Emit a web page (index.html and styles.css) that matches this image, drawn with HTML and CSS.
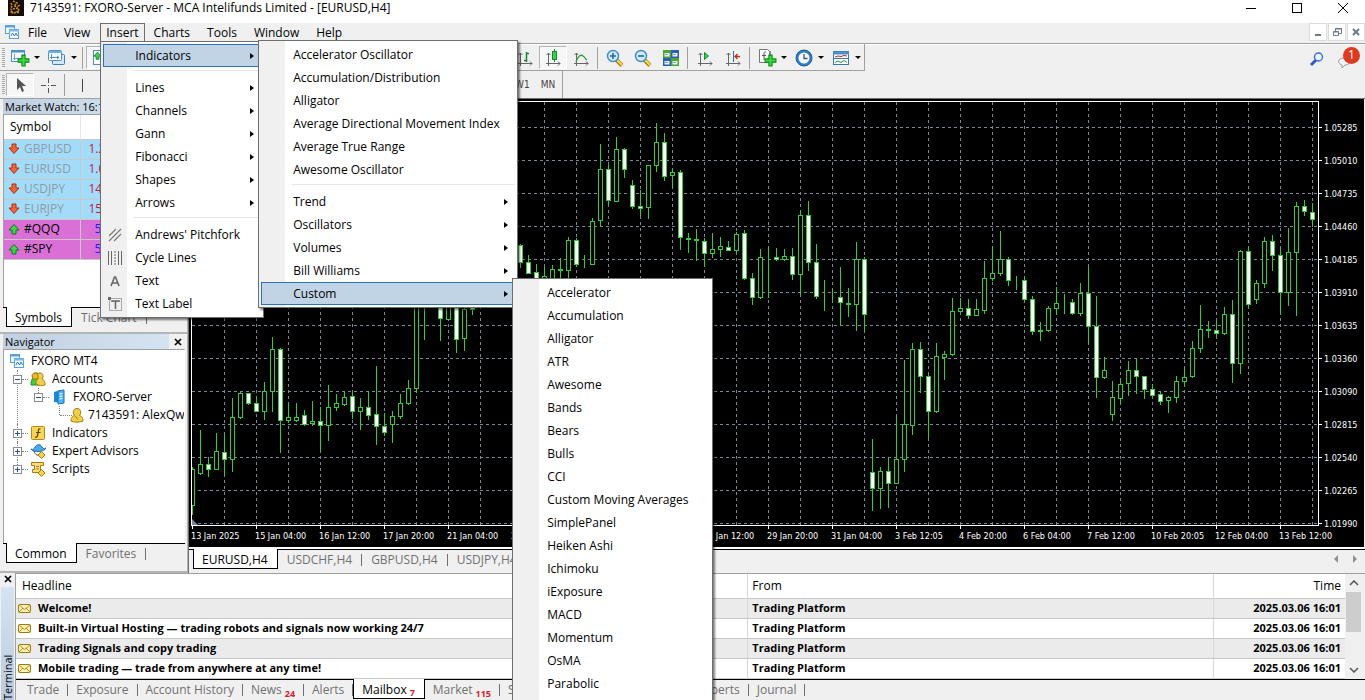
FILE: index.html
```html
<!DOCTYPE html>
<html lang="en">
<head>
    <meta charset="UTF-8">
    <meta name="viewport" content="width=device-width, initial-scale=1.0">
    <title>7143591: FXORO-Server - MCA Intelifunds Limited - [EURUSD,H4]</title>
    <link rel="stylesheet" href="styles.css">
</head>
<body>
    <svg class="defs" aria-hidden="true">
        <symbol id="i-mt" viewBox="0 0 16 16">
            <rect x="1.500" y="1.500" width="9" height="8" fill="#eaf5fd" stroke="#5aa2d8"/>
            <path d="M1 2.500h10" stroke="#5aa2d8" stroke-width="2"/>
            <rect x="5.500" y="5.500" width="9" height="9" fill="#f4faff" stroke="#5aa2d8"/>
            <path d="M5 6.500h10" stroke="#7db9e3" stroke-width="2"/>
            <path d="M7 12l1.500-3 2 3 1.500-3 1.500 3" fill="none" stroke="#2f7fc1"/>
        </symbol>
        <symbol id="i-plus" viewBox="0 0 12 12">
            <path d="M4.500 1h3v3.500H11v3H7.500V11h-3V7.500H1v-3h3.500z" fill="#3ddb3d" stroke="#0c8a1c"/>
        </symbol>
        <symbol id="i-axes" viewBox="0 0 16 16">
            <path d="M3.500 2v13M1 12.500h14M1.500 4l2-2 2 2M13 10.500l2 2-2 2" fill="none" stroke="#666"/>
        </symbol>
        <symbol id="i-down" viewBox="0 0 12 12">
            <path d="M4 1h4v4h3L6 10.500 1 5h3z" fill="#f0643c" stroke="#a83010"/>
        </symbol>
        <symbol id="i-up" viewBox="0 0 12 12">
            <path d="M4 11h4V7h3L6 1.500 1 7h3z" fill="#3fd24c" stroke="#0a7a1a"/>
        </symbol>
        <symbol id="i-mail" viewBox="0 0 13 11">
            <rect x=".5" y="1.500" width="12" height="8" rx="1" fill="#fdf0a8" stroke="#9a7a1c"/>
            <path d="M1 2l5.500 4.500L12 2M1 9l4-4M12 9L8 5" fill="none" stroke="#9a7a1c" stroke-width=".8"/>
        </symbol>
        <symbol id="i-man" viewBox="0 0 14 16">
            <path d="M1 14c0-4 2-5 3.500-5.500C2 5 3.500 1.500 7 1.500S12 5 9.500 8.500C11 9 13 10 13 14c-3 1.500-9 1.500-12 0z" fill="#f2cf4a" stroke="#a77b12"/>
            <path d="M5 9l3 3.500" stroke="#a77b12"/>
        </symbol>
    </svg>

    <header class="titlebar">
        <svg class="app-icon" viewBox="0 0 16 16"><rect width="16" height="16" fill="#130c04"/><path d="M5 1l4 2-3 3 4 1M10 6l2-1M3 3l1 2-1 4 2 4 7-1M5 9l5-1 1 3-4 1M3 11l1 3" fill="none" stroke="#c98a1b" stroke-width="1.600" stroke-dasharray="2 1"/></svg>
        <h1>7143591: FXORO-Server - MCA Intelifunds Limited - [EURUSD,H4]</h1>
        <div class="window-buttons">
            <button aria-label="Minimize"><svg viewBox="0 0 12 12"><path d="M1 6.500h10" stroke="#000"/></svg></button>
            <button aria-label="Maximize"><svg viewBox="0 0 12 12"><rect x="1.500" y="1.500" width="9" height="9" fill="none" stroke="#000"/></svg></button>
            <button aria-label="Close"><svg viewBox="0 0 12 12"><path d="M1 1l10 10M11 1L1 11" stroke="#000"/></svg></button>
        </div>
    </header>

    <nav class="menubar">
        <svg class="mt-icon"><use href="#i-mt"/></svg>
        <button>File</button>
        <button>View</button>
        <div class="menu-root">
            <button class="open">Insert</button>
            <ul class="menu menu-insert">
                <li class="selected"><button>Indicators<i class="arrow"></i></button>
                    <ul class="menu menu-indicators">
                        <li><button>Accelerator Oscillator</button></li>
                        <li><button>Accumulation/Distribution</button></li>
                        <li><button>Alligator</button></li>
                        <li><button>Average Directional Movement Index</button></li>
                        <li><button>Average True Range</button></li>
                        <li><button>Awesome Oscillator</button></li>
                        <li class="divider"></li>
                        <li><button>Trend<i class="arrow"></i></button></li>
                        <li><button>Oscillators<i class="arrow"></i></button></li>
                        <li><button>Volumes<i class="arrow"></i></button></li>
                        <li><button>Bill Williams<i class="arrow"></i></button></li>
                        <li class="selected"><button>Custom<i class="arrow"></i></button>
                            <ul class="menu menu-custom">
                                <li><button>Accelerator</button></li>
                                <li><button>Accumulation</button></li>
                                <li><button>Alligator</button></li>
                                <li><button>ATR</button></li>
                                <li><button>Awesome</button></li>
                                <li><button>Bands</button></li>
                                <li><button>Bears</button></li>
                                <li><button>Bulls</button></li>
                                <li><button>CCI</button></li>
                                <li><button>Custom Moving Averages</button></li>
                                <li><button>SimplePanel</button></li>
                                <li><button>Heiken Ashi</button></li>
                                <li><button>Ichimoku</button></li>
                                <li><button>iExposure</button></li>
                                <li><button>MACD</button></li>
                                <li><button>Momentum</button></li>
                                <li><button>OsMA</button></li>
                                <li><button>Parabolic</button></li>
                            </ul>
                        </li>
                    </ul>
                </li>
                <li class="divider"></li>
                <li><button>Lines<i class="arrow"></i></button></li>
                <li><button>Channels<i class="arrow"></i></button></li>
                <li><button>Gann<i class="arrow"></i></button></li>
                <li><button>Fibonacci<i class="arrow"></i></button></li>
                <li><button>Shapes<i class="arrow"></i></button></li>
                <li><button>Arrows<i class="arrow"></i></button></li>
                <li class="divider"></li>
                <li><button><svg class="item-icon" viewBox="0 0 16 16"><path d="M2 9l7-7M2 14L14 2M7 14l7-7" stroke="#777" stroke-width="1.200"/></svg>Andrews' Pitchfork</button></li>
                <li><button><svg class="item-icon" viewBox="0 0 16 16"><path d="M1.500 1v14M4.500 1v14M11.500 1v14M14.500 1v14" stroke="#666"/><path d="M8 1v14" stroke="#666" stroke-dasharray="2 1"/></svg>Cycle Lines</button></li>
                <li><button><svg class="item-icon" viewBox="0 0 16 16"><path d="M4 13L7.500 4h1L12 13M5.500 10h5" fill="none" stroke="#666" stroke-width="1.600"/></svg>Text</button></li>
                <li><button><svg class="item-icon" viewBox="0 0 16 16"><rect x="2.500" y="2.500" width="12" height="12" fill="none" stroke="#666" stroke-dasharray="1 1"/><path d="M1 1h3v3H1z" fill="#666"/><path d="M5 6V5h7v1M8.500 5v8" fill="none" stroke="#666" stroke-width="1.600"/></svg>Text Label</button></li>
            </ul>
        </div>
        <button>Charts</button>
        <button>Tools</button>
        <button>Window</button>
        <button>Help</button>
        <div class="mdi-buttons">
            <button aria-label="Minimize chart"><svg viewBox="0 0 10 10"><path d="M2 8h6" stroke="#6d7a8a" stroke-width="2"/></svg></button>
            <button aria-label="Restore chart"><svg viewBox="0 0 10 10"><path d="M3.500 4V1.500h6v5H7M3 2h7" fill="none" stroke="#6d7a8a"/><path d="M1.500 4.500h5v4h-5zM1 5h6" fill="none" stroke="#6d7a8a"/></svg></button>
            <button aria-label="Close chart"><svg viewBox="0 0 10 10"><path d="M2 2l6 6M8 2L2 8" stroke="#6d7a8a" stroke-width="2"/></svg></button>
        </div>
    </nav>

    <div class="toolbar toolbar-main">
        <div class="tools tools-left">
            <span class="grip"></span>
            <button class="tool drop" aria-label="New chart"><svg viewBox="0 0 20 18"><rect x="1.500" y="1.500" width="13" height="11" fill="#f4faff" stroke="#4a90c8"/><path d="M1 2.500h14" stroke="#4a90c8" stroke-width="2"/><path d="M4.500 5v6M3 9.500h8" stroke="#6aa0cc"/><use href="#i-plus" x="7" y="5" width="13" height="13"/></svg><i class="caret"></i></button>
            <button class="tool drop" aria-label="Profiles"><svg viewBox="0 0 20 18"><rect x="5.500" y="5.500" width="12" height="10" rx="1" fill="#d5e9f8" stroke="#3f7fb5"/><rect x="1.500" y="1.500" width="13" height="10" rx="1" fill="#f4faff" stroke="#4a90c8"/><path d="M1 3h14" stroke="#6fb0e0" stroke-width="2"/><path d="M4.500 5v5M3 8.500h9M10 7l2 1.500-2 1.500" fill="none" stroke="#5590c0"/></svg><i class="caret"></i></button>
            <span class="sep"></span>
            <button class="tool pressed" aria-label="Market Watch"><svg viewBox="0 0 18 18"><rect x="2.500" y="1.500" width="13" height="14" fill="#fff" stroke="#4a90c8"/><use href="#i-up" x="2" y="2" width="9" height="9"/><path d="M9 11l3 4 3-4z" fill="#e0552a"/></svg></button>
        </div>
        <div class="tools tools-right">
            <button class="tool" aria-label="Bar chart"><svg viewBox="0 0 18 18"><use href="#i-axes" x="1" y="2" width="16" height="16"/><path d="M10.500 3v10M8 11.500h2M11 4.500h2" stroke="#168a2b" stroke-width="1.500"/></svg></button>
            <button class="tool pressed" aria-label="Candlesticks"><svg viewBox="0 0 18 18"><use href="#i-axes" x="1" y="2" width="16" height="16"/><path d="M10.500 0v13" stroke="#168a2b"/><rect x="8.500" y="2.500" width="4" height="8" fill="#38d24c" stroke="#168a2b"/></svg></button>
            <button class="tool" aria-label="Line chart"><svg viewBox="0 0 18 18"><use href="#i-axes" x="1" y="2" width="16" height="16"/><path d="M4 13c2-6 5-8 7-6 2 1 2 3 4 4" fill="none" stroke="#2a9d3c" stroke-width="1.300"/></svg></button>
            <span class="sep"></span>
            <button class="tool" aria-label="Zoom in"><svg viewBox="0 0 18 18"><path d="M10.500 11l5.500 5.500" stroke="#a88412" stroke-width="4"/><path d="M11 11l5 5" stroke="#f7dc5c" stroke-width="2"/><circle cx="7" cy="7" r="5.500" fill="#cfe8fa" stroke="#3d8ac4" stroke-width="1.400"/><path d="M4 7h6M7 4v6" stroke="#2468a8" stroke-width="1.600"/></svg></button>
            <button class="tool" aria-label="Zoom out"><svg viewBox="0 0 18 18"><path d="M10.500 11l5.500 5.500" stroke="#a88412" stroke-width="4"/><path d="M11 11l5 5" stroke="#f7dc5c" stroke-width="2"/><circle cx="7" cy="7" r="5.500" fill="#cfe8fa" stroke="#3d8ac4" stroke-width="1.400"/><path d="M4 7h6" stroke="#2468a8" stroke-width="1.600"/></svg></button>
            <button class="tool" aria-label="Tile windows"><svg viewBox="0 0 18 18"><path d="M1 1h8v8H1zM9 9h8v8H9z" fill="#4fa62c"/><path d="M9 1h8v8H9zM1 9h8v8H1z" fill="#2e5fb8"/><path d="M2.500 4h5v3.500h-5zM10.500 4h5v3.500h-5zM2.500 12h5v3.500h-5zM10.500 12h5v3.500h-5z" fill="#e8f2fa"/><path d="M3 5.500h3M11 5.500h3M3 13.500h3M11 13.500h3" stroke="#86a8c8"/></svg></button>
            <span class="sep"></span>
            <button class="tool" aria-label="Auto scroll"><svg viewBox="0 0 18 18"><use href="#i-axes" x="1" y="2" width="16" height="16"/><path d="M8.500 3.500v7l4-3.500z" fill="#38d24c" stroke="#168a2b"/></svg></button>
            <button class="tool" aria-label="Chart shift"><svg viewBox="0 0 18 18"><use href="#i-axes" x="1" y="2" width="16" height="16"/><path d="M9.500 2v11" stroke="#2a6fae"/><path d="M16 7.500h-5M13.500 5L11 7.500l2.500 2.500" fill="none" stroke="#b83214" stroke-width="1.300"/></svg></button>
            <span class="sep"></span>
            <button class="tool drop" aria-label="Indicators"><svg viewBox="0 0 20 18"><path d="M5.500 2.500h8v11h-8z" fill="#fff" stroke="#888"/><path d="M2.500.5h8l2 2v11h-10z" fill="#fff" stroke="#777"/><path d="M9 3C7 2.500 7 4 7 6v5M5 6.500h4" fill="none" stroke="#555"/><use href="#i-plus" x="7" y="5" width="13" height="13"/></svg><i class="caret"></i></button>
            <button class="tool drop" aria-label="Periods"><svg viewBox="0 0 20 18"><circle cx="10" cy="9" r="8" fill="#2d7fc8" stroke="#1b5c9c"/><circle cx="10" cy="9" r="5.500" fill="#f2f8fd"/><path d="M10 5v4.500h3.500" fill="none" stroke="#555" stroke-width="1.300"/></svg><i class="caret"></i></button>
            <button class="tool drop" aria-label="Templates"><svg viewBox="0 0 20 18"><rect x="2.500" y="2.500" width="15" height="13" fill="#fff" stroke="#3878b0"/><path d="M2 4h16" stroke="#4a90d0" stroke-width="3"/><path d="M3 9.500h14" stroke="#3878b0"/><path d="M4 8l3-1 3 .5 3-1 3 .5" fill="none" stroke="#a83020"/><path d="M4 13.500l3-1.500 3 1.500 3-2 3 2" fill="none" stroke="#2a9040"/></svg><i class="caret"></i></button>
        </div>
        <div class="toolbar-end">
            <button aria-label="Search"><svg viewBox="0 0 16 16"><path d="M7 9l-5 5" stroke="#2a5bc8" stroke-width="3"/><circle cx="9.500" cy="6" r="4" fill="#eef4ff" stroke="#3a6ad8" stroke-width="1.400"/></svg></button>
            <button class="messages" aria-label="Messages"><svg viewBox="0 0 16 16"><path d="M2 7c3-3 10-3 11 0s-2 5-5 5l-3 3v-3C2 11 1 9 2 7z" fill="#f4f4f8" stroke="#9a9aa4"/></svg><span class="badge">1</span></button>
        </div>
    </div>

    <div class="toolbar toolbar-lines">
        <div class="tools tools-left">
            <span class="grip"></span>
            <button class="tool pressed" aria-label="Cursor"><svg viewBox="0 0 18 18"><path d="M6 2v12l3-3 2 5 2-1-2-5h4z" fill="#555"/></svg></button>
            <button class="tool" aria-label="Crosshair"><svg viewBox="0 0 18 18"><path d="M9.500 2v5M9.500 12v5M2 9.500h5M12 9.500h5M9 9.500h1" stroke="#555"/></svg></button>
            <span class="sep"></span>
            <button class="tool" aria-label="Vertical line"><svg viewBox="0 0 18 18"><path d="M9.500 3v13" stroke="#444"/></svg></button>
        </div>
        <div class="tools periods">
            <button>W1</button>
            <button>MN</button>
        </div>
    </div>

    <main class="workspace">
        <aside class="side">
            <section class="panel market">
                <h2 class="panel-title">Market Watch: 16:19:40</h2>
                <div class="panel-body">
                    <table class="quotes">
                        <thead><tr><th>Symbol</th><th></th></tr></thead>
                        <tbody>
                            <tr class="off"><td><svg><use href="#i-down"/></svg>GBPUSD</td><td>1.2</td></tr>
                            <tr class="off"><td><svg><use href="#i-down"/></svg>EURUSD</td><td>1.0</td></tr>
                            <tr class="off"><td><svg><use href="#i-down"/></svg>USDJPY</td><td>14</td></tr>
                            <tr class="off"><td><svg><use href="#i-down"/></svg>EURJPY</td><td>15</td></tr>
                            <tr class="pink"><td><svg><use href="#i-up"/></svg>#QQQ</td><td>5</td></tr>
                            <tr class="pink"><td><svg><use href="#i-up"/></svg>#SPY</td><td>5</td></tr>
                        </tbody>
                    </table>
                </div>
                <div class="tabs">
                    <button class="tab active">Symbols</button>
                    <button class="tab">Tick Chart</button>
                </div>
            </section>
            <section class="panel navigator">
                <h2 class="panel-title">Navigator<button class="close" aria-label="Close Navigator"><svg viewBox="0 0 8 8"><path d="M1 1l6 6M7 1L1 7" stroke="#000" stroke-width="1.700"/></svg></button></h2>
                <div class="panel-body">
                    <div class="tree-row tree-top"><svg><use href="#i-mt"/></svg>FXORO MT4</div>
                    <ul class="tree">
                        <li>
                            <div class="tree-row"><i class="box minus"></i><svg viewBox="0 0 16 16"><path d="M1 14c0-4 1-6 2-7-1-3 0-5 3-5s4 2 3 6l1 6z" fill="#3fce3f" stroke="#228a22"/><path d="M6 13c0-4 1-4 2-5-2-3-1-6 2-6s4 3 2 6c2 1 3 2 3 6-3 1-6 1-9-1z" fill="#f2cf4a" stroke="#a77b12"/><path d="M2 5c0-4 6-4 6 0v3H3z" fill="#e8b82e" stroke="#a77b12"/></svg>Accounts</div>
                            <ul class="tree">
                                <li>
                                    <div class="tree-row"><i class="box minus"></i><svg viewBox="0 0 16 16"><path d="M3 3l7-2v13l-7-1z" fill="#1d87d6"/><path d="M7 2l6-1v13l-6 1z" fill="#4db4f4" stroke="#1470b8"/><path d="M8.500 5l3-.5M8.500 7.500l3-.5M8.500 10l3-.5" stroke="#fff"/></svg>FXORO-Server</div>
                                    <ul class="tree">
                                        <li><div class="tree-row"><i class="box empty"></i><svg><use href="#i-man"/></svg>7143591: AlexQw</div></li>
                                    </ul>
                                </li>
                            </ul>
                        </li>
                        <li><div class="tree-row"><i class="box"></i><svg viewBox="0 0 16 16"><rect x="1.500" y="1.500" width="13" height="13" rx="1" fill="#f7d557" stroke="#b08a1c"/><path d="M10.500 4C8 3 8.500 6 8 8s0 5-3 4M6 7.500h4.500" fill="none" stroke="#5a4408" stroke-width="1.200"/></svg>Indicators</div></li>
                        <li><div class="tree-row"><i class="box"></i><svg viewBox="0 0 16 16"><path d="M1 6c2 1 3 0 4-2s5-4 7 0c1 2 2 2 4 1-1 4-13 5-15 1z" fill="#4fa8e4" stroke="#1f6fae"/><path d="M4 8c1 4 4 5 7 4" fill="none" stroke="#4b4b4b"/><path d="M11.500 8.500L15 12l-3.500 3.500L8 12z" fill="#f5d24e" stroke="#a77b12"/></svg>Expert Advisors</div></li>
                        <li><div class="tree-row"><i class="box"></i><svg viewBox="0 0 16 16"><path d="M1.500 1.500h12v3h-3v7h-8v-3h2v-4h-3z" fill="#f7df80" stroke="#a77b12"/><path d="M6 5.500h3M6 8h3" stroke="#a77b12"/><path d="M11.500 8.500L15 12l-3.500 3.500L8 12z" fill="#f5d24e" stroke="#a77b12"/></svg>Scripts</div></li>
                    </ul>
                </div>
                <div class="tabs">
                    <button class="tab active">Common</button>
                    <button class="tab">Favorites</button>
                </div>
            </section>
        </aside>

        <section class="chart-area">
            <div class="chart">
                <svg id="plot" class="plot" role="img" aria-label="EURUSD H4 candlestick chart"></svg>
                <div id="prices" class="prices"></div>
                <div id="times" class="times"></div>
            </div>
            <div class="tabs chart-tabs">
                <button class="tab active">EURUSD,H4</button>
                <button class="tab">USDCHF,H4</button>
                <button class="tab">GBPUSD,H4</button>
                <button class="tab">USDJPY,H4</button>
                <span class="scrollers"><i class="left"></i><i class="right"></i></span>
            </div>
        </section>
    </main>

    <section class="terminal">
        <div class="terminal-side">
            <button class="close" aria-label="Close Terminal"><svg viewBox="0 0 8 8"><path d="M1 1l6 6M7 1L1 7" stroke="#000" stroke-width="1.700"/></svg></button>
            <span>Terminal</span>
        </div>
        <div class="terminal-main">
            <div class="mail-wrap">
                <table class="mail">
                    <thead><tr><th>Headline</th><th class="from">From</th><th class="time">Time</th></tr></thead>
                    <tbody>
                        <tr><td><svg><use href="#i-mail"/></svg>Welcome!</td><td>Trading Platform</td><td class="time">2025.03.06 16:01</td></tr>
                        <tr><td><svg><use href="#i-mail"/></svg>Built-in Virtual Hosting — trading robots and signals now working 24/7</td><td>Trading Platform</td><td class="time">2025.03.06 16:01</td></tr>
                        <tr><td><svg><use href="#i-mail"/></svg>Trading Signals and copy trading</td><td>Trading Platform</td><td class="time">2025.03.06 16:01</td></tr>
                        <tr><td><svg><use href="#i-mail"/></svg>Mobile trading — trade from anywhere at any time!</td><td>Trading Platform</td><td class="time">2025.03.06 16:01</td></tr>
                    </tbody>
                </table>
                <div class="scrollbar">
                    <svg viewBox="0 0 10 6"><path d="M1 5l4-4 4 4" fill="none" stroke="#555" stroke-width="1.500"/></svg>
                    <span class="thumb"></span>
                    <svg viewBox="0 0 10 6"><path d="M1 1l4 4 4-4" fill="none" stroke="#555" stroke-width="1.500"/></svg>
                </div>
            </div>
            <div class="tabs terminal-tabs">
                <button class="tab">Trade</button>
                <button class="tab">Exposure</button>
                <button class="tab">Account History</button>
                <button class="tab">News<sub>24</sub></button>
                <button class="tab">Alerts</button>
                <button class="tab active">Mailbox<sub>7</sub></button>
                <button class="tab">Market<sub>115</sub></button>
                <button class="tab">Signals</button>
                <button class="tab">Articles</button>
                <button class="tab">Code Base</button>
                <button class="tab">Experts</button>
                <button class="tab">Journal</button>
            </div>
        </div>
    </section>

    <script src="chart.js"></script>
</body>
</html>
```
FILE: styles.css
```css
* {
    box-sizing: border-box;
}

body {
    margin: 0;
    height: 100vh;
    overflow: hidden;
    display: flex;
    flex-direction: column;
    background: #f0f0f0;
    color: #000;
    font-family: "Open Sans", "Noto Sans", sans-serif;
    font-size: 12px;
    line-height: 16px;
}

button {
    margin: 0;
    padding: 0;
    border: 0;
    background: none;
    color: inherit;
    font: inherit;
    white-space: nowrap;
}

ul {
    margin: 0;
    padding: 0;
    list-style: none;
}

h1, h2 {
    margin: 0;
    font-size: 12px;
    font-weight: normal;
}

svg {
    flex: none;
}

.defs {
    display: none;
}

/* title bar */
.titlebar {
    display: flex;
    align-items: center;
    height: 23px;
    padding: 0 8px 8px;
    background: #fff;
}

.titlebar h1 {
    flex: 1;
    margin-left: 6px;
}

.app-icon {
    width: 16px;
    height: 16px;
}

.window-buttons {
    display: flex;
}

.window-buttons button {
    width: 46px;
    height: 15px;
    display: flex;
    align-items: center;
    justify-content: center;
}

.window-buttons svg {
    width: 12px;
    height: 12px;
}

.window-buttons button:last-child {
    width: 28px;
    margin-left: 9px;
}

/* menu bar */
.menubar {
    display: flex;
    height: 20px;
    padding-left: 4px;
}

.menubar > button,
.menu-root > button {
    height: 19px;
    padding: 0 8px;
    margin-right: 1px;
}

.menubar .mt-icon {
    width: 16px;
    height: 16px;
    margin-top: 1px;
}

.menu-root {
    position: relative;
    margin-left: 1px;
}

.menu-root > .open {
    padding: 0 5px;
    border: 1px solid #6e6e6e;
    border-bottom: 0;
}

.menu {
    position: absolute;
    z-index: 10;
    padding: 2px;
    border: 1px solid #6e6e6e;
    background: linear-gradient(90deg, #f0f0f0 26px, #fff 26px);
    box-shadow: 2px 2px 2px rgba(0, 0, 0, 0.5);
}

.menu li {
    position: relative;
    height: 23px;
}

.menu li > button {
    display: flex;
    align-items: center;
    width: 100%;
    height: 23px;
    padding-left: 31px;
    border: 1px solid transparent;
}

.menu .selected > button {
    background: #c0d4e5;
    border-color: #2a73b5;
}

.menu .divider {
    height: 9px;
    margin-left: 31px;
    border-bottom: 5px solid transparent;
    box-shadow: inset 0 -1px #e6e6e6;
}

.menu .item-icon {
    width: 16px;
    height: 16px;
    margin: 0 12px 0 -28px;
}

.arrow {
    margin: 0 6px 0 auto;
    border: 3px solid transparent;
    border-left: 4px solid #000;
    border-right: 0;
}

.menu-insert {
    top: 18px;
    left: 0;
    width: 164px;
}

.menu-insert > li:first-child > button {
    width: 158px;
}

.menu-indicators {
    top: -4px;
    left: 155px;
    width: 260px;
}

.menu-custom {
    top: -4px;
    left: 251px;
    width: 201px;
    padding-bottom: 30px;
}

.mdi-buttons {
    display: flex;
    gap: 1px;
    margin-left: auto;
}

.mdi-buttons button {
    width: 18px;
    height: 18px;
    padding: 3px;
    border: 1px solid #dcdcdc;
    background: #fff;
}

.mdi-buttons svg {
    display: block;
    width: 10px;
    height: 10px;
}

/* toolbars */
.toolbar {
    display: flex;
    height: 28px;
    border-top: 1px solid #a0a0a0;
    box-shadow: inset 0 1px #fff;
}

.toolbar-lines {
    height: 27px;
    border-top: 0;
    box-shadow: none;
}

.tools {
    display: flex;
    align-items: center;
    border-bottom: 1px solid #a0a0a0;
}

.toolbar-main .tools {
    padding-top: 1px;
}

.toolbar-lines .tools {
    border-bottom: 0;
}

.tools-left {
    width: 511px;
}

.tools-right,
.periods {
    border-right: 1px solid #a0a0a0;
}

.grip {
    width: 3px;
    height: 20px;
    margin: 0 1px 0 2px;
    background: repeating-linear-gradient(#a8a8a8 0 1px, transparent 1px 2px);
}

.sep {
    width: 1px;
    height: 22px;
    margin: 0 3px 0 2px;
    background: #a0a0a0;
}

.tool {
    display: flex;
    align-items: center;
    justify-content: center;
    width: 28px;
    height: 23px;
}

.tool svg {
    width: 18px;
    height: 18px;
}

.tool.pressed {
    border: 1px solid #b4b4b4;
    border-right-color: #fff;
    border-bottom-color: #fff;
    background: #f7f7f7;
}

.tool.drop {
    width: 37px;
    gap: 4px;
}

.tool.drop svg {
    width: 20px;
}

.caret {
    border: 3px solid transparent;
    border-top: 3px solid #000;
    border-bottom: 0;
}

.periods button {
    padding: 0 4px;
    margin-right: 3px;
    color: #444;
    font-family: "DejaVu Sans Condensed", sans-serif;
    font-size: 10px;
}

.toolbar-end {
    display: flex;
    gap: 12px;
    margin: 6px 5px 0 auto;
}

.toolbar-end svg {
    width: 16px;
    height: 16px;
}

.messages {
    position: relative;
    width: 23px;
    text-align: left;
}

.messages svg {
    margin-top: 3px;
}

.badge {
    position: absolute;
    top: -3px;
    right: 0;
    width: 17px;
    height: 17px;
    border-radius: 50%;
    background: #dd3a22;
    color: #fff;
    text-align: center;
}

/* workspace */
.workspace {
    flex: 1;
    display: flex;
    min-height: 0;
}

.side {
    display: flex;
    flex-direction: column;
    width: 188px;
    border-top: 1px solid #a0a0a0;
}

.panel {
    display: flex;
    flex-direction: column;
    padding-left: 3px;
    border-bottom: 2px solid #b4b4b4;
    border-right: 1px solid #b4b4b4;
}

.market {
    height: 235px;
}

.navigator {
    flex: 1;
}

.panel-title {
    display: flex;
    align-items: center;
    justify-content: space-between;
    height: 15px;
    padding-left: 2px;
    font-size: 11px;
    line-height: 15px;
    background: linear-gradient(90deg, #c0d0e0, #d5e4f2 166px, #f0f0f0 166px);
}

.close {
    margin-right: 5px;
}

.close svg {
    display: block;
    width: 8px;
    height: 8px;
}

.panel-body {
    flex: 1;
    min-height: 0;
    margin-right: 2px;
    border: 1px solid #a0a0a0;
    border-bottom: 0;
    border-right-color: #fff;
    background: #fff;
    overflow: hidden;
}

.quotes {
    width: 100%;
    border-collapse: collapse;
    table-layout: fixed;
}

.quotes th {
    height: 24px;
    padding: 0 0 0 6px;
    font-weight: normal;
    text-align: left;
    border-right: 1px solid #e5e5e5;
}

.quotes th:first-child {
    width: 76px;
}

.quotes td {
    height: 20px;
    padding: 0 0 0 4px;
    line-height: 16px;
    border: 1px solid #c8c8c8;
    border-left: 0;
}

.quotes td svg {
    width: 12px;
    height: 12px;
    margin-right: 4px;
    vertical-align: -2px;
}

.quotes td + td {
    padding-left: 8px;
}

.off td {
    background: #a3dcfb;
    color: #8f9ba3;
}

.off td + td {
    color: #c8143c;
}

.pink td {
    background: #da70d6;
}

.pink td + td {
    padding-left: 14px;
    color: #2020ff;
}

/* tabs shared by panels, chart and terminal */
.tabs {
    display: flex;
    flex: none;
    height: 25px;
    padding-left: 3px;
}

.tab {
    display: flex;
    align-items: center;
    height: 20px;
    padding-left: 9px;
    border-top: 1px solid #000;
    color: #707070;
}

.tab::after {
    content: "";
    width: 1px;
    height: 12px;
    margin-left: 9px;
    background: #707070;
}

.tab.active {
    padding: 2px 9px 0 8px;
    border: 1px solid #000;
    border-top: 0;
    background: #fff;
    color: #000;
}

.tab.active::after {
    display: none;
}

.side .tabs {
    background: linear-gradient(#000 1px, #f0f0f0 1px);
    margin-right: 2px;
}

.navigator .tabs {
    height: 28px;
}

/* navigator tree */
.tree-row {
    display: flex;
    align-items: center;
    height: 18px;
    white-space: nowrap;
}

.tree-row svg {
    width: 16px;
    height: 16px;
    margin-right: 6px;
}

.tree-top {
    margin-left: 5px;
    margin-top: 2px;
}

.tree {
    margin-left: 9px;
}

.tree .tree {
    margin-left: 21px;
}

.tree li {
    position: relative;
}

.tree li::before {
    content: "";
    position: absolute;
    top: 0;
    left: 4px;
    height: 100%;
    border-left: 1px dotted #808080;
}

.tree li:last-child::before {
    height: 9px;
}

.box {
    position: relative;
    width: 9px;
    height: 9px;
    margin-right: 8px;
    border: 1px solid #8a8a8a;
    background:
        linear-gradient(#2b4fa8, #2b4fa8) center / 5px 1px no-repeat,
        linear-gradient(#2b4fa8, #2b4fa8) center / 1px 5px no-repeat,
        #fff;
}

.box.minus {
    background: linear-gradient(#2b4fa8, #2b4fa8) center / 5px 1px no-repeat, #fff;
}

.box.empty {
    margin-right: 12px;
    border-color: transparent;
    background: none;
}

.box.empty + svg {
    margin-right: 3px;
}

.box::after {
    content: "";
    position: absolute;
    top: 3px;
    left: 8px;
    width: 6px;
    border-top: 1px dotted #808080;
}

.box.empty::after {
    left: 4px;
    width: 12px;
}

/* chart */
.chart-area {
    flex: 1;
    display: flex;
    flex-direction: column;
    min-width: 0;
    border-top: 1px solid #6e6e6e;
    border-left: 1px solid #6e6e6e;
}

.chart {
    flex: 1;
    display: grid;
    grid-template: 1fr 20px / 1fr 45px;
    min-height: 0;
    margin-right: 1px;
    padding: 2px 0 0 2px;
    background: #000;
    color: #fff;
    font-family: "DejaVu Sans Condensed", sans-serif;
    font-size: 9px;
    line-height: 12px;
    border-bottom: 1px solid #000;
}

.plot {
    width: 100%;
    height: 100%;
    border: 1px solid #fff;
}

.grid {
    stroke: #778899;
    stroke-dasharray: 3 3;
}

.wick,
.body {
    stroke: #32cd32;
    fill: #000;
}

.body.down {
    fill: #fff;
}

.prices {
    display: flex;
    flex-direction: column;
    height: 0;
    padding-top: 10px;
}

.prices span {
    flex: none;
    display: flex;
    align-items: center;
    height: 33px;
    gap: 2px;
}

.prices span::before {
    content: "";
    width: 3px;
    height: 1px;
    background: #fff;
}

.times {
    grid-column: 1 / 3;
    display: flex;
    overflow: hidden;
}

.times span {
    flex: none;
    width: 64px;
    padding-top: 4px;
    background: linear-gradient(#fff, #fff) 1px 0 / 1px 3px no-repeat;
    white-space: nowrap;
}

.chart-tabs {
    height: 26px;
    padding-left: 4px;
    border-top: 2px solid #fff;
    background: linear-gradient(#000 1px, #f0f0f0 1px);
}

.scrollers {
    display: flex;
    gap: 15px;
    margin: 6px 8px 0 auto;
}

.scrollers i {
    height: 0;
    border: 4px solid transparent;
}

.scrollers .left {
    border-right-color: #909090;
    border-left: 0;
}

.scrollers .right {
    border-left-color: #909090;
    border-right: 0;
}

/* terminal */
.terminal {
    display: flex;
    height: 127px;
}

.terminal-side {
    display: flex;
    flex-direction: column;
    align-items: center;
    width: 15px;
    padding-top: 2px;
}

.terminal-side .close {
    margin: 0 0 4px;
}

.terminal-side span {
    flex: 1;
    width: 13px;
    background: linear-gradient(#b9cbdd, #d5e4f2);
    font-size: 11px;
    line-height: 13px;
    writing-mode: vertical-rl;
    transform: rotate(180deg);
}

.terminal-main {
    flex: 1;
    min-width: 0;
    border-left: 1px solid #a0a0a0;
    border-top: 1px solid #a0a0a0;
}

.mail-wrap {
    display: flex;
    height: 105px;
    margin-right: 3px;
    background: #fff;
}

.mail {
    flex: 1;
    border-collapse: collapse;
    table-layout: fixed;
}

.mail th {
    height: 24px;
    padding: 0 6px;
    font-weight: normal;
    text-align: left;
}

.mail .from {
    width: 35%;
}

.mail .time {
    width: 132px;
    padding-right: 4px;
    text-align: right;
}

.mail td {
    height: 20px;
    padding: 0 4px 0 2px;
    border-top: 1px solid #c8c8c8;
    border-bottom: 1px solid #c8c8c8;
    font-size: 11px;
    font-weight: bold;
}

.mail td + td,
.mail th + th {
    padding-left: 4px;
    border-left: 1px solid #d8d8d8;
}

.mail tbody tr:nth-child(odd) {
    background: #ebebeb;
}

.mail td svg {
    width: 13px;
    height: 11px;
    margin-right: 7px;
    vertical-align: -2px;
}

.scrollbar {
    display: flex;
    flex-direction: column;
    align-items: center;
    width: 17px;
    padding: 6px 0;
    background: #f0f0f0;
}

.scrollbar svg {
    width: 10px;
    height: 6px;
}

.thumb {
    width: 15px;
    height: 40px;
    margin: 6px 0 auto;
    background: #cdcdcd;
}

.terminal-tabs {
    padding-left: 3px;
    background: linear-gradient(#000 1px, #f0f0f0 1px);
}

.terminal-tabs .tab {
    padding-left: 8px;
}

.terminal-tabs .tab::after {
    margin-left: 8px;
}

.tab sub {
    align-self: flex-end;
    margin-left: 3px;
    color: #d8202c;
    font-size: 9px;
    font-weight: bold;
    line-height: 11px;
}
```
FILE: chart.js
```js
// high, low, body top, body bottom, 1 = bearish (filled); one candle every 8px
const candles = [
    [467, 515, 469, 505, 0], [430, 475, 464, 473, 0], [457, 477, 464, 469, 1], [433, 469, 451, 469, 0],
    [435, 476, 452, 459, 1], [398, 472, 417, 459, 0], [392, 419, 393, 417, 0], [393, 405, 393, 403, 1],
    [397, 412, 403, 411, 1], [382, 420, 391, 411, 0], [337, 412, 349, 391, 0], [348, 453, 349, 420, 1],
    [404, 423, 417, 420, 0], [403, 422, 417, 420, 0], [410, 426, 415, 424, 1], [401, 426, 421, 423, 0],
    [407, 451, 421, 425, 1], [385, 441, 407, 425, 0], [394, 411, 403, 407, 0], [392, 406, 397, 404, 0],
    [393, 419, 396, 411, 1], [398, 430, 407, 411, 0], [391, 420, 407, 415, 1], [366, 445, 414, 426, 1],
    [413, 436, 426, 432, 1], [411, 443, 416, 424, 0], [394, 419, 403, 416, 0], [380, 405, 388, 403, 0],
    [250, 393, 255, 388, 0], [240, 340, 255, 280, 1], [240, 300, 260, 280, 0], [280, 341, 290, 318, 1],
    [280, 319, 290, 319, 0], [280, 353, 290, 339, 1], [280, 351, 309, 338, 0], [280, 315, 290, 309, 1],
    [250, 300, 260, 290, 0], [250, 300, 260, 290, 0], [240, 300, 260, 290, 1], [240, 290, 250, 280, 0],
    [235, 270, 245, 260, 0], [244, 268, 245, 262, 1], [255, 274, 262, 273, 1], [264, 290, 272, 285, 1],
    [267, 290, 276, 285, 0], [265, 280, 269, 278, 0], [258, 278, 269, 270, 0], [237, 280, 240, 270, 0],
    [238, 267, 240, 264, 1], [255, 268, 264, 264, 0], [218, 265, 221, 264, 0], [144, 226, 169, 220, 0],
    [165, 205, 169, 200, 1], [137, 202, 149, 201, 0], [148, 178, 149, 169, 1], [180, 209, 185, 206, 1],
    [190, 216, 206, 208, 1], [165, 219, 165, 207, 0], [123, 172, 142, 165, 0], [133, 181, 142, 176, 1],
    [169, 188, 172, 175, 0], [170, 250, 172, 237, 1], [233, 253, 238, 239, 1], [229, 261, 239, 240, 1],
    [238, 267, 241, 253, 1], [233, 258, 249, 253, 0], [237, 257, 246, 249, 0], [241, 251, 247, 250, 1],
    [232, 252, 234, 250, 0], [230, 280, 233, 278, 1], [273, 305, 278, 297, 1], [249, 299, 257, 297, 0],
    [247, 298, 257, 257, 0], [248, 261, 257, 259, 1], [249, 261, 256, 259, 0], [248, 280, 256, 274, 1],
    [210, 295, 215, 274, 0], [201, 271, 215, 262, 1], [244, 299, 262, 296, 1], [280, 311, 296, 296, 0],
    [289, 303, 296, 296, 0], [267, 325, 297, 302, 1], [288, 317, 303, 304, 0], [242, 331, 259, 304, 0],
    [257, 331, 259, 314, 1], [439, 511, 472, 488, 1], [467, 509, 471, 488, 0], [458, 508, 471, 483, 1],
    [417, 484, 459, 483, 0], [360, 472, 424, 459, 0], [343, 435, 349, 425, 0], [342, 393, 349, 376, 1],
    [375, 438, 376, 411, 1], [343, 413, 356, 411, 0], [351, 380, 354, 357, 0], [298, 356, 311, 354, 0],
    [298, 313, 308, 311, 0], [299, 319, 308, 315, 1], [299, 316, 309, 315, 0], [261, 314, 278, 310, 0],
    [246, 281, 273, 278, 0], [231, 276, 259, 273, 0], [257, 286, 259, 280, 1], [276, 290, 280, 280, 0],
    [276, 301, 280, 299, 1], [296, 335, 299, 331, 1], [322, 341, 330, 331, 1], [306, 332, 308, 330, 0],
    [287, 315, 303, 308, 0], [294, 314, 302, 302, 0], [299, 315, 302, 313, 1], [283, 316, 293, 313, 0],
    [267, 344, 293, 326, 1], [296, 398, 326, 377, 1], [357, 379, 370, 377, 0], [381, 421, 397, 414, 0],
    [378, 404, 384, 398, 0], [361, 396, 370, 383, 0], [359, 394, 370, 376, 1], [376, 399, 376, 389, 1],
    [384, 397, 389, 395, 1], [391, 405, 394, 401, 1], [396, 413, 397, 400, 0], [376, 403, 381, 397, 0],
    [368, 387, 377, 381, 0], [341, 378, 348, 376, 0], [305, 353, 329, 348, 0], [321, 338, 329, 330, 0],
    [321, 337, 330, 333, 1], [307, 335, 314, 333, 0], [300, 383, 314, 363, 1], [250, 374, 251, 363, 0],
    [247, 307, 251, 304, 1], [280, 304, 283, 299, 0], [237, 288, 241, 283, 0], [235, 271, 241, 255, 1],
    [248, 314, 255, 292, 1], [228, 306, 252, 292, 0], [202, 316, 206, 252, 0], [200, 216, 206, 211, 1],
    [203, 227, 212, 219, 1]
];

const prices = ['1.05285', '1.05010', '1.04735', '1.04460', '1.04185', '1.03910', '1.03635',
    '1.03360', '1.03090', '1.02815', '1.02540', '1.02265', '1.01990'];

const times = ['13 Jan 2025', '15 Jan 04:00', '16 Jan 12:00', '17 Jan 20:00', '21 Jan 04:00', '22 Jan 12:00',
    '23 Jan 20:00', '27 Jan 04:00', '28 Jan 12:00', '29 Jan 20:00', '31 Jan 04:00', '3 Feb 12:05',
    '4 Feb 20:00', '6 Feb 04:00', '7 Feb 12:00', '10 Feb 20:05', '12 Feb 04:00', '13 Feb 12:00'];

const TOP = 102;
const plot = document.getElementById('plot');
let shapes = '';

for (let x = 32; x < 3000; x += 32) {
    shapes += `<line class="grid" x1="${x + 0.5}" y1="0" x2="${x + 0.5}" y2="100%"/>`;
}
for (let i = 0; i < prices.length; i++) {
    const y = 127 - TOP + i * 33 + 0.5;
    shapes += `<line class="grid" x1="0" y1="${y}" x2="100%" y2="${y}"/>`;
}
candles.forEach(([high, low, top, bottom, down], i) => {
    const x = i * 8 + 0.5;
    shapes += `<line class="wick" x1="${x}" y1="${high - TOP}" x2="${x}" y2="${low - TOP}"/>`;
    shapes += `<rect class="body ${down ? 'down' : ''}" x="${x - 2}" y="${top - TOP + 0.5}" width="4" height="${bottom - top}"/>`;
});
// marker in the bottom left corner of the plot
shapes += '<svg y="100%" overflow="visible"><path d="M0 -6L6 0H0z" fill="#778899"/></svg>';
plot.innerHTML = shapes;

document.getElementById('prices').innerHTML = prices.map(p => `<span>${p}</span>`).join('');
document.getElementById('times').innerHTML = times.map(t => `<span>${t}</span>`).join('');
```
